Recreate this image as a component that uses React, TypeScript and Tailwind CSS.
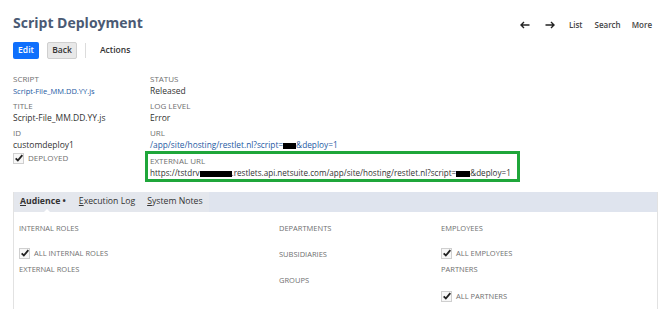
import React from 'react';

const Label: React.FC<{ children: React.ReactNode }> = ({ children }) => (
  <div className="text-[8px] leading-[12px] uppercase text-[#6f6f6f]">{children}</div>
);

const Box: React.FC = () => (
  <span className="inline-block shrink-0 w-[11px] h-[11px] bg-[#f7f7f7] border border-[#cfcfcf] relative mr-[4px]">
    <svg viewBox="0 0 12 12" className="absolute left-[0px] top-[-1px] w-[10px] h-[10px]">
      <path d="M2 6.5 L4.6 9 L10 2.5" fill="none" stroke="#222" strokeWidth="2.2" />
    </svg>
  </span>
);

const Redact: React.FC<{ w: string }> = ({ w }) => (
  <span className={`inline-block ${w} h-[6px] bg-black align-middle`} />
);

const Arrow: React.FC<{ dir: 'l' | 'r' }> = ({ dir }) => (
  <svg viewBox="0 0 10 8" className="w-[10px] h-[8px]">
    {dir === 'l' ? (
      <path d="M9.5 4 H1.5 M4 1 L1 4 L4 7" fill="none" stroke="#222" strokeWidth="1.4" />
    ) : (
      <path d="M0.5 4 H8.5 M6 1 L9 4 L6 7" fill="none" stroke="#222" strokeWidth="1.4" />
    )}
  </svg>
);

export default function App() {
  return (
    <div className="w-[670px] h-[309px] bg-white text-[#333] font-['Open_Sans',sans-serif] overflow-hidden">
      <div className="flex items-center justify-between pl-[13px] pr-[18px] pt-[12px]">
        <h1 className="text-[14px] leading-[22px] font-bold text-[#4a5a74]">Script Deployment</h1>
        <div className="flex items-center text-[8px] font-semibold text-[#444] pt-[3px]">
          <Arrow dir="l" />
          <span className="ml-[15px]"><Arrow dir="r" /></span>
          <span className="ml-[14px]">List</span>
          <span className="ml-[12px]">Search</span>
          <span className="ml-[11px]">More</span>
        </div>
      </div>

      <div className="flex items-center pl-[13px] mt-[8px]">
        <button className="h-[17px] w-[26px] rounded-[2px] bg-[#0f6ffc] text-white text-[8.5px] font-semibold">Edit</button>
        <button className="h-[17px] w-[30px] ml-[8px] rounded-[2px] bg-[#e8e8e8] border border-[#cfcfcf] text-[#333] text-[8.5px] font-semibold">Back</button>
        <span className="w-px h-[15px] bg-[#dcdcdc] ml-[8px]" />
        <span className="ml-[14px] text-[8.5px] font-semibold text-[#333]">Actions</span>
      </div>

      <div className="grid grid-cols-[137px_1fr] pl-[13px] mt-[14px]">
        <div className="flex flex-col">
          <Label>Script</Label>
          <div className="text-[7.5px] leading-[12px] text-[#255aa3]">Script-File_MM.DD.YY.js</div>
          <div className="mt-[3px]"><Label>Title</Label></div>
          <div className="text-[8.5px] leading-[12px]">Script-File_MM.DD.YY.js</div>
          <div className="mt-[3px]"><Label>ID</Label></div>
          <div className="text-[8.5px] leading-[12px]">customdeploy1</div>
          <div className="mt-[1px] flex items-center text-[8px] text-[#6f6f6f]">
            <Box />DEPLOYED
          </div>
        </div>
        <div className="flex flex-col">
          <Label>Status</Label>
          <div className="text-[8.5px] leading-[12px]">Released</div>
          <div className="mt-[3px]"><Label>Log Level</Label></div>
          <div className="text-[8.5px] leading-[12px]">Error</div>
          <div className="mt-[3px]"><Label>URL</Label></div>
          <div className="text-[8.3px] leading-[12px] text-[#255aa3] whitespace-nowrap">
            /app/site/hosting/restlet.nl?script=<Redact w="w-[13px]" />&amp;deploy=1
          </div>
          <div className="-ml-[5px] w-[375px] h-[31px] border-[3px] border-[#1fa63a] pl-[2px] pt-[1px]">
            <Label>External URL</Label>
            <div className="text-[8.1px] leading-[12px] text-[#333] whitespace-nowrap">
              https://tstdrv<Redact w="w-[32px]" />.restlets.api.netsuite.com/app/site/hosting/restlet.nl?script=<Redact w="w-[14px]" />&amp;deploy=1
            </div>
          </div>
        </div>
      </div>

      <div className="ml-[13px] mt-[10px] w-[645px] h-[118px] border border-[#e2e2e2] border-t-0">
        <div className="h-[20px] bg-[#dfe4ee] flex items-center text-[8.7px] text-[#333]">
          <div className="h-full flex items-center bg-[#e4e7ed] pl-[6px] pr-[6px]">
            <span className="relative font-bold">
              <span className="underline">A</span>udience •
              <span className="absolute left-[22px] top-[14px] w-0 h-0 border-l-[5px] border-r-[5px] border-b-[5px] border-l-transparent border-r-transparent border-b-white" />
            </span>
            <span className="ml-[13px]"><span className="underline">E</span>xecution Log</span>
            <span className="ml-[12px]"><span className="underline">S</span>ystem Notes</span>
          </div>
        </div>
        <div className="grid grid-cols-[260px_162px_1fr] pl-[5px] pt-[10px] text-[7.5px] text-[#6f6f6f] uppercase">
          <div className="flex flex-col">
            <div className="leading-[12px]">Internal Roles</div>
            <div className="mt-[13px] leading-[12px] flex items-center"><Box />All Internal Roles</div>
            <div className="mt-[4px] leading-[12px]">External Roles</div>
          </div>
          <div className="flex flex-col">
            <div className="leading-[12px]">Departments</div>
            <div className="mt-[14px] leading-[12px]">Subsidiaries</div>
            <div className="mt-[14px] leading-[12px]">Groups</div>
          </div>
          <div className="flex flex-col">
            <div className="leading-[12px]">Employees</div>
            <div className="mt-[13px] leading-[12px] flex items-center"><Box />All Employees</div>
            <div className="mt-[4px] leading-[12px]">Partners</div>
            <div className="mt-[15px] leading-[12px] flex items-center"><Box />All Partners</div>
          </div>
        </div>
      </div>
    </div>
  );
}
